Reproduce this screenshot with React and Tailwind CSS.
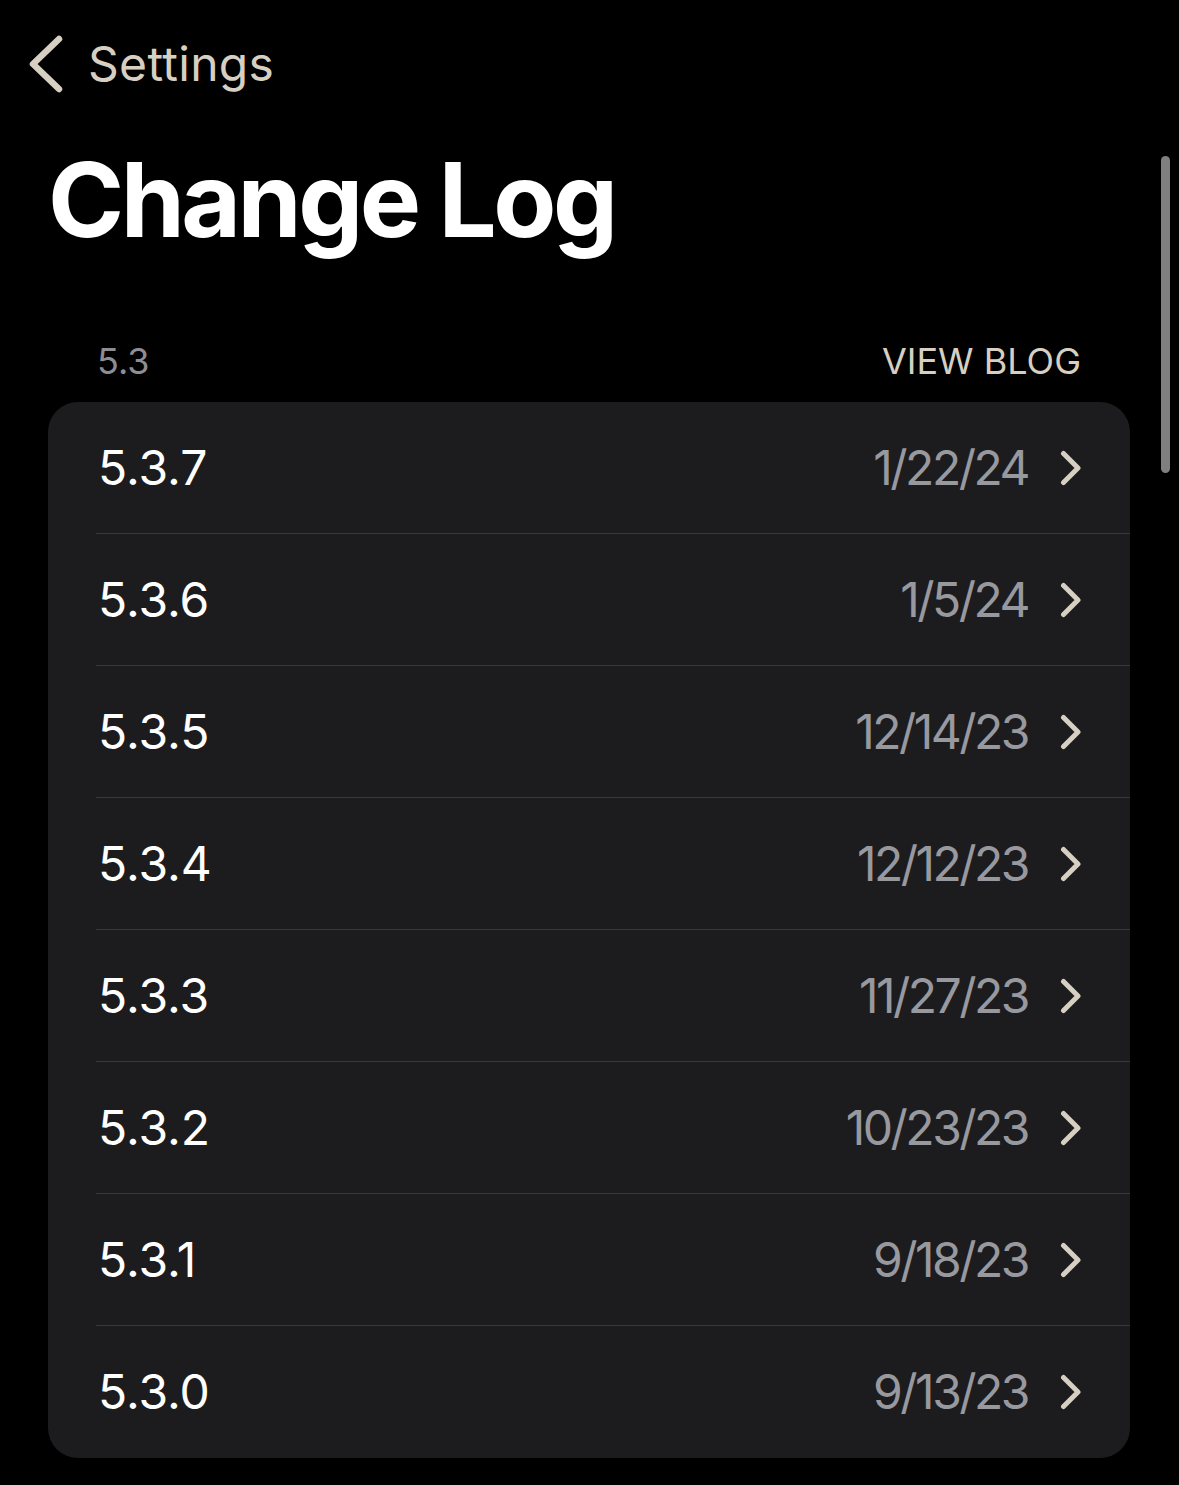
import React from "react";

const rows = [
  ["5.3.7", "1/22/24"],
  ["5.3.6", "1/5/24"],
  ["5.3.5", "12/14/23"],
  ["5.3.4", "12/12/23"],
  ["5.3.3", "11/27/23"],
  ["5.3.2", "10/23/23"],
  ["5.3.1", "9/18/23"],
  ["5.3.0", "9/13/23"],
];

function Chevron() {
  return (
    <svg width="22" height="36" viewBox="0 0 22 36" fill="none" className="shrink-0">
      <path d="M3.5 3.5 L18 18 L3.5 32.5" stroke="#d6cfc2" strokeWidth="5" strokeLinecap="round" strokeLinejoin="round" />
    </svg>
  );
}

export default function App() {
  return (
    <div
      className="relative w-[1179px] h-[1485px] bg-black overflow-hidden text-white"
      style={{ fontFamily: "Inter, 'Noto Sans', sans-serif" }}
    >
      {/* nav */}
      <div className="flex items-center h-[64px] mt-[32px] pl-[28px] gap-[24px]">
        <svg width="36" height="58" viewBox="0 0 36 58" fill="none" className="shrink-0">
          <path d="M31 4 L5 29 L31 54" stroke="#d6cfc2" strokeWidth="6.5" strokeLinecap="round" strokeLinejoin="round" />
        </svg>
        <span className="text-[48px] leading-none text-[#d6cfc2] tracking-[0.3px]">Settings</span>
      </div>

      {/* title */}
      <h1 className="pl-[48px] mt-[52px] text-[103px] leading-none font-bold tracking-[-3.5px]">Change Log</h1>

      {/* section header */}
      <div className="flex items-end justify-between mt-[92px] pl-[97px] pr-[98px]">
        <span className="text-[36px] leading-none text-[#8d8d93]">5.3</span>
        <span className="text-[36px] leading-none text-[#d6cfc2]">VIEW BLOG</span>
      </div>

      {/* card */}
      <div className="mx-[48px] mt-[23px] w-[1082px] bg-[#1c1c1e] rounded-[30px] overflow-hidden pl-[48px]">
        {rows.map(([v, d], i) => (
          <div
            key={v}
            className={
              "flex items-center justify-between h-[132px] pl-[2px] pr-[48px] " +
              (i < rows.length - 1 ? "border-b border-[#38383a]" : "")
            }
          >
            <span className="text-[48px] leading-none text-white">{v}</span>
            <div className="flex items-center gap-[32px]">
              <span className="text-[48px] leading-none text-[#98989f] tracking-[-2.5px]">{d}</span>
              <Chevron />
            </div>
          </div>
        ))}
      </div>

      {/* scrollbar */}
      <div className="absolute left-[1161px] top-[156px] w-[9px] h-[317px] rounded-full bg-[#7f7f7f]" />
    </div>
  );
}
